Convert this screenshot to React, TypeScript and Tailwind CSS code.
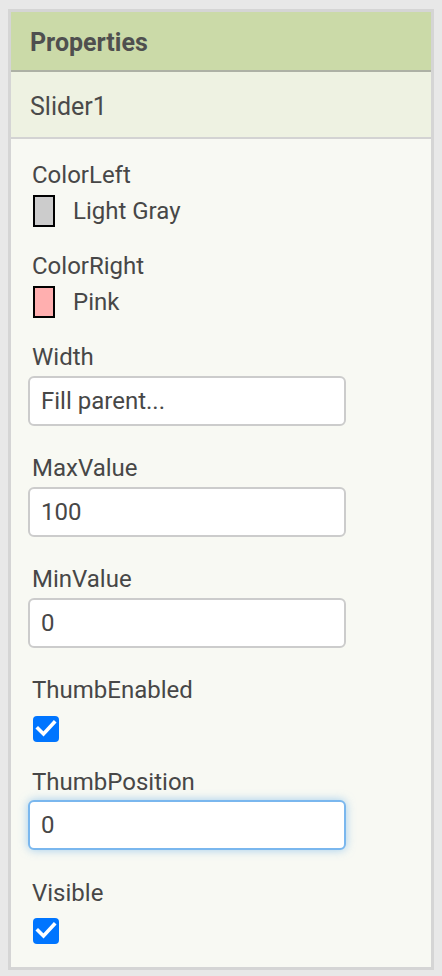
import React from "react";

const font = { fontFamily: "Roboto, 'Noto Sans', Arial, sans-serif" };

function Label({ children }: { children: React.ReactNode }) {
  return <div className="h-[26px] leading-[26px] text-[24px] text-[#474747]">{children}</div>;
}

function Swatch({ color, name }: { color: string; name: string }) {
  return (
    <div className="mt-[7px] mb-[26px] flex h-[32px] items-center pl-[1px]">
      <div className={`h-[32px] w-[22px] border-2 border-black ${color}`} />
      <span className="ml-[18px] text-[24px] leading-none text-[#474747]">{name}</span>
    </div>
  );
}

function TextBox({ value, focused, mt = "mt-[6px]", mb = "mb-[29px]" }: { value: string; focused?: boolean; mt?: string; mb?: string }) {
  return (
    <div
      className={`${mt} ${mb} ml-[-4px] flex h-[50px] w-[318px] items-center rounded-[6px] border-2 bg-white pl-[11px] text-[24px] text-[#474747] ${
        focused
          ? "border-[#7ab7ee] shadow-[0_0_10px_rgba(102,175,233,0.6)]"
          : "border-[#cccccc]"
      }`}
    >
      {value}
    </div>
  );
}

function Check({ mt, mb }: { mt: string; mb: string }) {
  return (
    <div className={`${mt} ${mb} ml-[1px] flex h-[26px] w-[26px] items-center justify-center rounded-[4px] bg-[#0075ff]`}>
      <svg width="26" height="26" viewBox="0 0 26 26">
        <polyline points="5,12.5 10.5,18 21,6.5" fill="none" stroke="white" strokeWidth="3.6" strokeLinecap="square" />
      </svg>
    </div>
  );
}

export default function App() {
  return (
    <div className="min-h-[976px] w-full bg-[#e8e8e8] pt-[9px] pb-[6px]" style={font}>
      <div className="mx-2 border-[3px] border-[#d5d5d5]">
        <div className="flex h-[60px] items-center border-b-2 border-[#adb1a5] bg-[#cbdaa8] pl-[19px] pt-[3px]">
          <span className="text-[25px] font-bold text-[#4f4f4f]">Properties</span>
        </div>
        <div className="flex h-[67px] items-center border-b-2 border-[#d3d3d3] bg-[#eef2e2] pl-[19px] pt-[5px]">
          <span className="text-[25px] text-[#4a4a4a]">Slider1</span>
        </div>
        <div className="bg-[#f8f9f3] pt-[23px] pb-[23px] pl-[21px]">
          <Label>ColorLeft</Label>
          <Swatch color="bg-[#cccccc]" name="Light Gray" />
          <Label>ColorRight</Label>
          <Swatch color="bg-[#ffafaf]" name="Pink" />
          <Label>Width</Label>
          <TextBox value="Fill parent..." />
          <Label>MaxValue</Label>
          <TextBox value="100" />
          <Label>MinValue</Label>
          <TextBox value="0" />
          <Label>ThumbEnabled</Label>
          <Check mt="mt-[13px]" mb="mb-[27px]" />
          <Label>ThumbPosition</Label>
          <TextBox value="0" focused mt="mt-[5px]" mb="mb-[30px]" />
          <Label>Visible</Label>
          <Check mt="mt-[12px]" mb="mb-0" />
        </div>
      </div>
    </div>
  );
}
